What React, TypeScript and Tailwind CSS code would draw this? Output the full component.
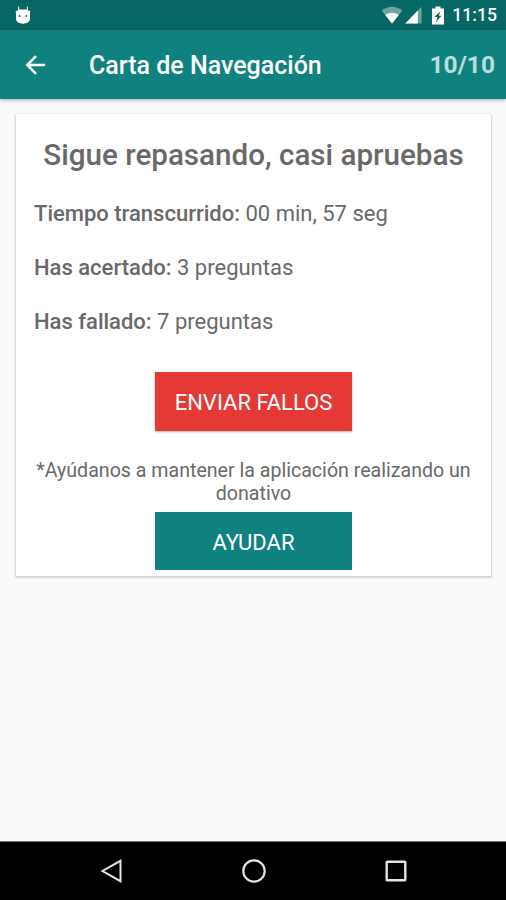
import type { ReactNode } from "react";

function StatusBar() {
  return (
    <div className="flex h-[30px] shrink-0 items-center justify-between bg-[#066764] pl-[15px] pr-[9px]">
      <svg className="h-[18px] w-4" viewBox="0 0 16 18" fill="#fff">
        <path d="M3.600 0.500V4M12.400 0.500V4" stroke="#fff" strokeWidth="1.200" strokeOpacity="0.800" />
        <path d="M3 3.400h10v1.400h2.300v1.800h-.3v6.200c0 3-2.900 4.900-7 4.900s-7-1.900-7-4.900V6.600H.7V4.800H3z" />
        <circle cx="4.600" cy="10" r="0.900" fill="#066764" />
        <circle cx="11.400" cy="10" r="0.900" fill="#066764" />
      </svg>
      <div className="flex items-center">
        <svg className="h-[18px] w-[22px]" viewBox="0 0 22 18">
          <path d="M0.500 4.500Q11-3 21.500 4.500L11 17.500Z" fill="#fff" fillOpacity="0.400" />
          <path d="M4.200 9Q11 4.500 17.800 9L11 17.500Z" fill="#fff" />
        </svg>
        <svg className="ml-[2px] h-[18px] w-[17px]" viewBox="0 0 17 18">
          <path d="M16.500 0.700V17.500H0.300Z" fill="#fff" fillOpacity="0.400" />
          <path d="M12.800 4.500V17.500H0.300Z" fill="#fff" />
        </svg>
        <svg className="ml-[10px] h-[19px] w-3" viewBox="0 0 12 19">
          <path d="M3.500 0.500h5v2H12v16H0v-16h3.500z" fill="#fff" />
          <path d="M8.200 5.500L2.500 11h3L4 16l5.500-6.200H6.800z" fill="#066764" />
        </svg>
        <span className="ml-[8px] pt-[2px] text-[17.600px] leading-none font-medium text-white">11:15</span>
      </div>
    </div>
  );
}

function AppBar() {
  return (
    <header className="z-10 flex h-[69px] shrink-0 items-center bg-[#0f827f] pr-[11px] pl-[25px] shadow-[0_1px_4px_rgba(0,0,0,0.35)]">
      <svg className="h-[20px] w-[21px]" viewBox="0 0 21 20" fill="none" stroke="#fff" strokeWidth="2.500">
        <path d="M20.200 10H2.500M11 1.200L2.200 10L11 18.800" />
      </svg>
      <h1 className="ml-[43px] flex-1 pt-[2px] text-[25px] font-medium text-white">Carta de Navegación</h1>
      <span className="pt-[2px] text-[24.600px] font-bold text-[#b7dddc]">10/10</span>
    </header>
  );
}

function Stat({ label, children }: { label: string; children: ReactNode }) {
  return (
    <p className="h-[54px] text-[22px] leading-[26px]">
      <b className="font-medium">{label}</b> {children}
    </p>
  );
}

function NavigationBar() {
  return (
    <nav className="flex h-[59px] shrink-0 items-center justify-between border-t border-[#777] bg-black pr-[99px] pl-[100px]">
      <svg className="h-6 w-[22px]" viewBox="0 0 22 24" fill="none" stroke="#e4e4e4" strokeWidth="2">
        <path d="M20.500 1.800V22.200L2.500 12Z" />
      </svg>
      <svg className="h-6 w-6" viewBox="0 0 24 24" fill="none" stroke="#e4e4e4" strokeWidth="2.200">
        <circle cx="12" cy="12" r="10.700" />
      </svg>
      <svg className="h-[22px] w-[22px]" viewBox="0 0 22 22" fill="none" stroke="#e4e4e4" strokeWidth="2.400">
        <rect x="1.700" y="1.700" width="18.600" height="18.600" rx="0.500" />
      </svg>
    </nav>
  );
}

export default function App() {
  return (
    <div className="flex h-[900px] w-[506px] flex-col bg-[#fafafa] font-[Roboto,sans-serif] text-[#696969]">
      <StatusBar />
      <AppBar />
      <main className="flex-1 pt-[15px] pr-[15px] pl-4">
        <section className="h-[462px] rounded-[1px] bg-white px-[18px] pt-[25px] shadow-[0_1px_2px_1px_rgba(0,0,0,0.16)]">
          <h2 className="text-center text-[29.600px] leading-[33px] font-medium whitespace-nowrap">
            Sigue repasando, casi apruebas
          </h2>
          <div className="mt-[29px]">
            <Stat label="Tiempo transcurrido:">00 min, 57 seg</Stat>
            <Stat label="Has acertado:">3 preguntas</Stat>
            <Stat label="Has fallado:">7 preguntas</Stat>
          </div>
          <button className="mx-auto mt-[9px] block h-[59px] w-[197px] bg-[#e53935] pt-[2px] text-[22px] text-white shadow-[0_1px_2px_rgba(0,0,0,0.3)]">
            ENVIAR FALLOS
          </button>
          <p className="mt-[28px] text-center text-[19.600px] leading-[23px]">
            *Ayúdanos a mantener la aplicación realizando un donativo
          </p>
          <button className="mx-auto mt-[7px] block h-[58px] w-[197px] bg-[#0f827f] pt-[2px] text-[22px] text-white">
            AYUDAR
          </button>
        </section>
      </main>
      <NavigationBar />
    </div>
  );
}
